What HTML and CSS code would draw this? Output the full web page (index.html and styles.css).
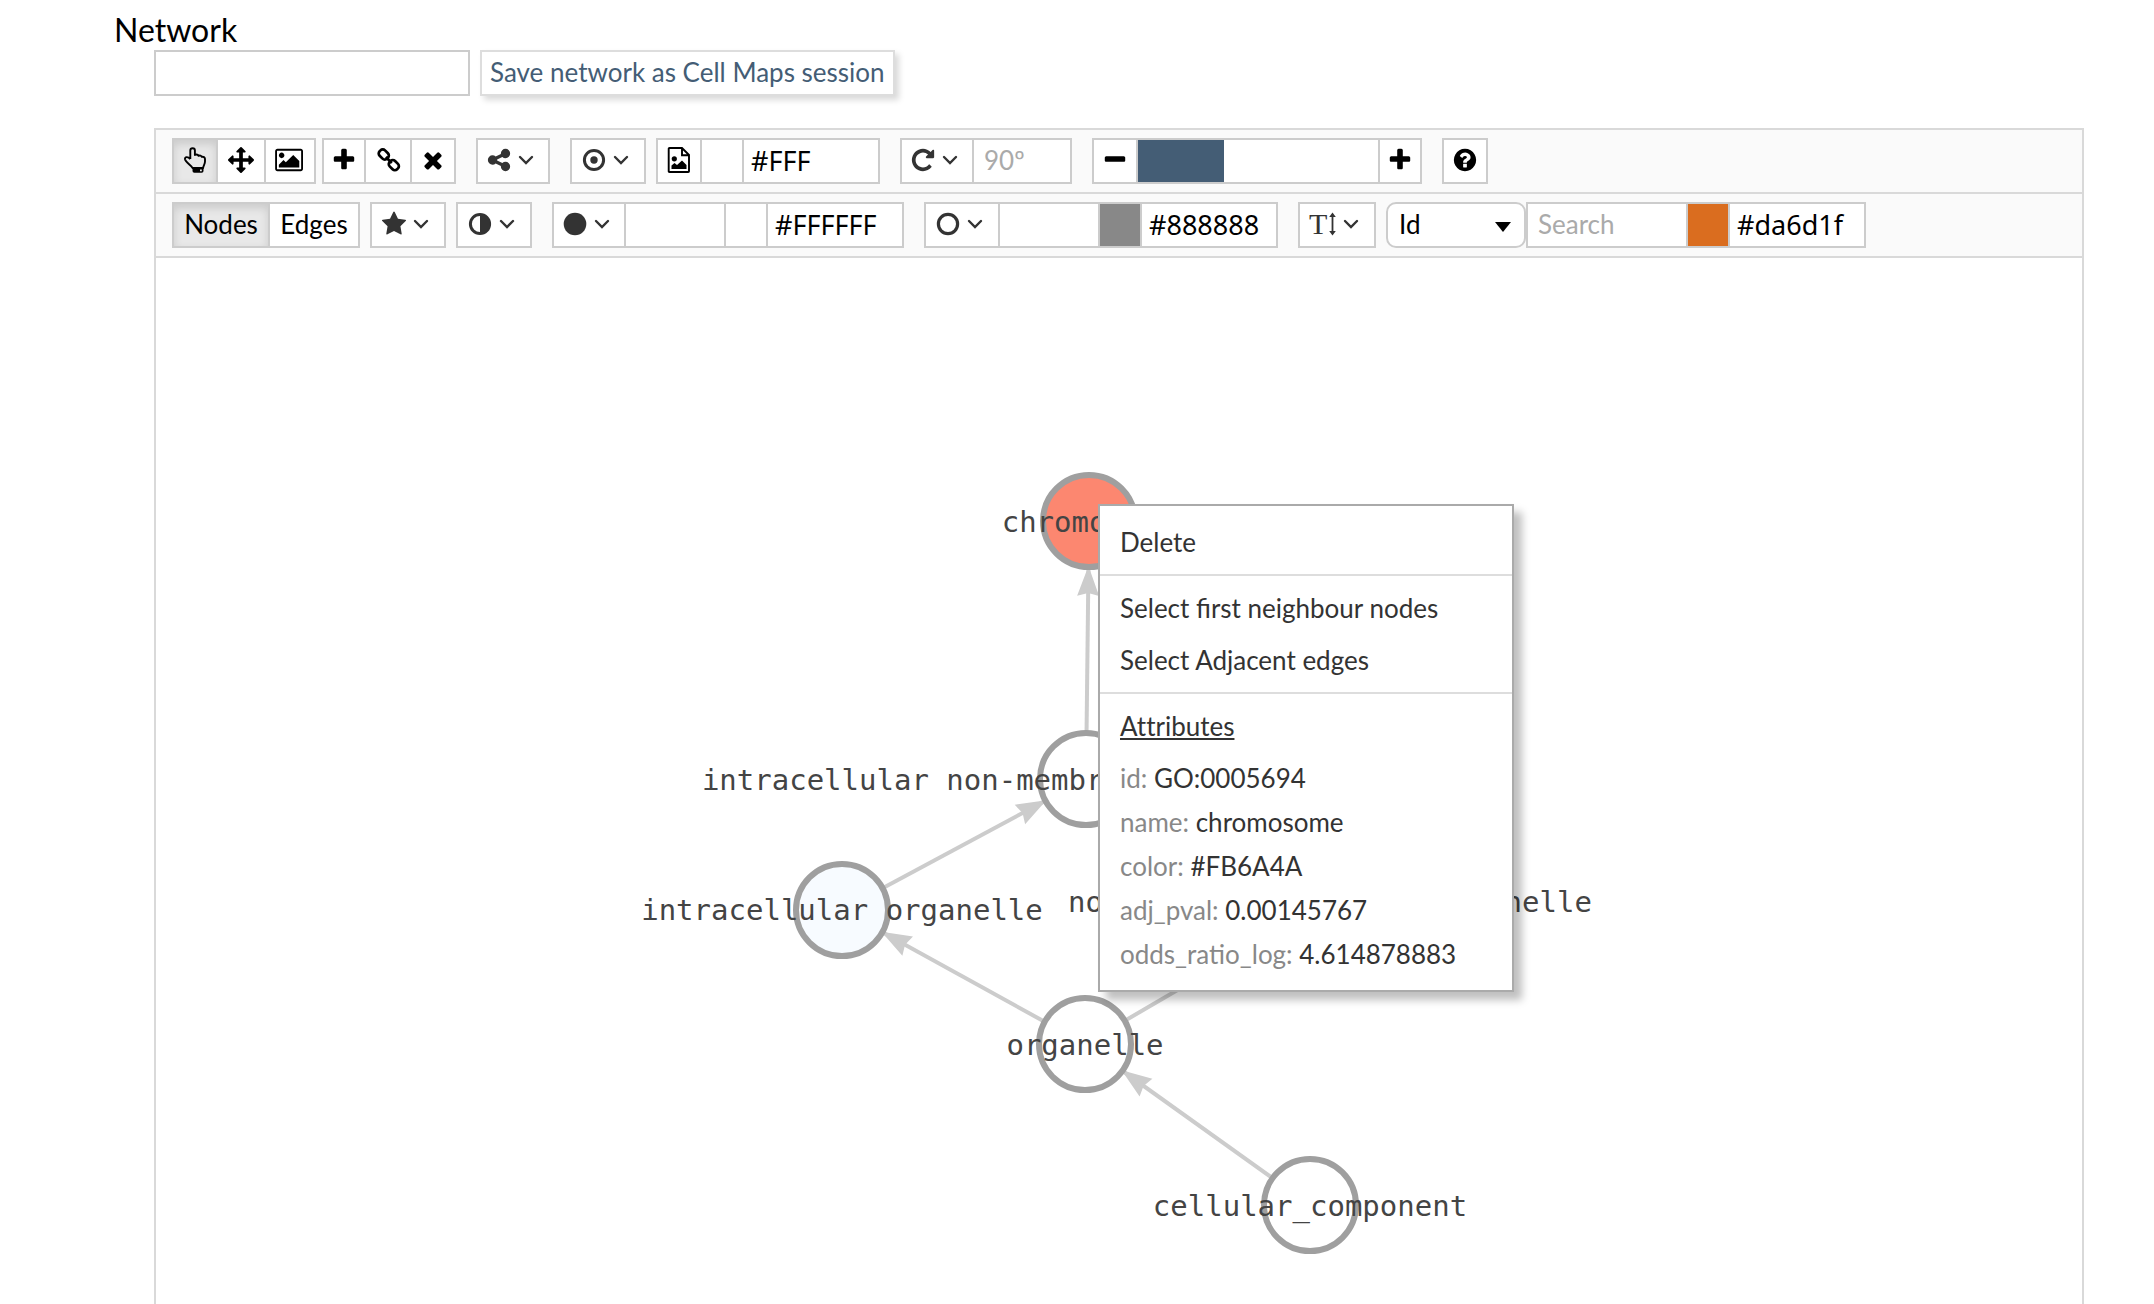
FILE: index.html
```html
<!DOCTYPE html>
<html lang="en">
<head>
<meta charset="utf-8">
<title>Network</title>
<link rel="stylesheet" href="styles.css">
</head>
<body>
<svg class="sprite" aria-hidden="true">
  <symbol id="plus" viewBox="0 0 1792 1792"><path d="M1600 736v192q0 40-28 68t-68 28h-416v416q0 40-28 68t-68 28h-192q-40 0-68-28t-28-68v-416h-416q-40 0-68-28t-28-68v-192q0-40 28-68t68-28h416v-416q0-40 28-68t68-28h192q40 0 68 28t28 68v416h416q40 0 68 28t28 68z"/></symbol>
  <symbol id="chevron" viewBox="0 0 16 26"><path d="M2 10l6 6 6-6" fill="none" stroke="currentColor" stroke-width="2.4" stroke-linecap="round"/></symbol>
</svg>

<h1 class="title">Network</h1>
<main class="viewer">
  <form class="session">
    <input class="session-name" type="text" aria-label="Session name">
    <button class="session-save" type="button">Save network as Cell Maps session</button>
  </form>

  <section class="panel">
    <div class="toolbar">
      <div class="group tight">
        <button class="seg w42 active" type="button" aria-label="Select"><svg class="icon" viewBox="0 0 26 26"><path d="M8.3 12V3.6a2.3 2.3 0 0 1 4.6 0V8c1.4-.7 3-.3 3.6.8 1.3-.6 2.8-.2 3.3 1 1.6-.4 3.2.6 3.2 2.2v2.5c0 2.800-1.700 4-1.900 6.500H10.500C9.500 18.200 3.500 15.500 3 12.200c-.2-2.400 2.800-3 5.300-.2" fill="none" stroke="currentColor" stroke-width="1.900" stroke-linejoin="round"/><path fill-rule="evenodd" d="M10.500 20.500h11V24q0 1.800-1.800 1.800h-7.400q-1.800 0-1.800-1.800zM18 22.500v1.800h1.800v-1.800z"/></svg></button>
        <button class="seg w46" type="button" aria-label="Move"><svg class="icon" viewBox="0 0 1792 1792"><path d="M1792 896q0 26-19 45l-256 256q-19 19-45 19t-45-19-19-45v-128h-384v384h128q26 0 45 19t19 45-19 45l-256 256q-19 19-45 19t-45-19l-256-256q-19-19-19-45t19-45 45-19h128v-384h-384v128q0 26-19 45t-45 19-45-19l-256-256q-19-19-19-45t19-45l256-256q19-19 45-19t45 19 19 45v128h384v-384h-128q-26 0-45-19t-19-45 19-45l256-256q19-19 45-19t45 19l256 256q19 19 19 45t-19 45-45 19h-128v384h384v-128q0-26 19-45t45-19 45 19l256 256q19 19 19 45z"/></svg></button>
        <button class="seg w48" type="button" aria-label="Background image"><svg class="icon wide" viewBox="0 0 1920 1792"><path d="M576 576q0 80-56 136t-136 56-136-56-56-136 56-136 136-56 136 56 56 136zm1024 384v448h-1408v-192l320-320 160 160 512-512zm96-704h-1600q-13 0-22.500 9.500t-9.500 22.500v1216q0 13 9.500 22.500t22.500 9.500h1600q13 0 22.500-9.500t9.500-22.500v-1216q0-13-9.500-22.500t-22.500-9.500zm160 32v1216q0 66-47 113t-113 47h-1600q-66 0-113-47t-47-113v-1216q0-66 47-113t113-47h1600q66 0 113 47t47 113z"/></svg></button>
      </div>
      <div class="group wide-gap">
        <button class="seg w40" type="button" aria-label="Add node"><svg class="icon"><use href="#plus"/></svg></button>
        <button class="seg w44" type="button" aria-label="Link nodes"><svg class="icon" viewBox="0 0 26 26"><g fill="none" stroke="currentColor" stroke-width="2.700"><rect x="-5" y="-3.800" width="10.500" height="7.600" rx="3.200" transform="translate(8.600 7.300) rotate(45)"/><rect x="-5.500" y="-3.800" width="10.500" height="7.600" rx="3.200" transform="translate(19 18.300) rotate(45)"/><path d="M10.800 10l6 6"/></g></svg></button>
        <button class="seg w42" type="button" aria-label="Remove"><svg class="icon" viewBox="0 0 1792 1792"><path d="M1490 1322q0 40-28 68l-136 136q-28 28-68 28t-68-28l-294-294-294 294q-28 28-68 28t-68-28l-136-136q-28-28-28-68t28-68l294-294-294-294q-28-28-28-68t28-68l136-136q28-28 68-28t68 28l294 294 294-294q28-28 68-28t68 28l136 136q28 28 28 68t-28 68l-294 294 294 294q28 28 28 68z"/></svg></button>
      </div>
      <div class="group wide-gap">
        <button class="seg drop w70" type="button" aria-label="Layout"><svg class="icon" viewBox="0 0 1792 1792"><path d="M1344 1024q133 0 226.500 93.500t93.500 226.500-93.500 226.500-226.500 93.500-226.500-93.500-93.500-226.500q0-12 2-34l-360-180q-92 86-218 86-133 0-226.500-93.500t-93.500-226.500 93.500-226.500 226.500-93.500q126 0 218 86l360-180q-2-22-2-34 0-133 93.500-226.500t226.500-93.500 226.500 93.500 93.500 226.500-93.500 226.500-226.500 93.500q-126 0-218-86l-360 180q2 22 2 34t-2 34l360 180q92-86 218-86z"/></svg><svg class="chevron"><use href="#chevron"/></svg></button>
      </div>
      <div class="group">
        <button class="seg drop w72" type="button" aria-label="Selection"><svg class="icon" viewBox="0 0 26 26"><circle cx="13" cy="13" r="9.600" fill="none" stroke="currentColor" stroke-width="3"/><circle cx="13" cy="13" r="3.700"/></svg><svg class="chevron"><use href="#chevron"/></svg></button>
      </div>
      <div class="group wide-gap">
        <button class="seg w42" type="button" aria-label="Export image"><svg class="icon" viewBox="0 0 26 26"><path d="M3.500 1h12.500l7 7v16.200q0 .8-.8.8H3.500q-.8 0-.8-.8V1.800q0-.8.8-.8zM16 1v7.300h7" fill="none" stroke="currentColor" stroke-width="1.900"/><circle cx="8.300" cy="11.800" r="2.600"/><path d="M5.500 22v-3.500l3-2.500 2.500 2 5-4.500 4.500 4.500V22z"/></svg></button>
        <button class="seg w40" type="button" aria-label="Background colour"></button>
        <input class="seg w134 hex" type="text" value="#FFF" aria-label="Background colour code">
      </div>
      <div class="group wide-gap">
        <button class="seg drop w70" type="button" aria-label="Rotate"><svg class="icon" viewBox="0 0 1792 1792"><path d="M1664 256v448q0 26-19 45t-45 19h-448q-42 0-59-40-17-39 14-69l138-138q-148-137-349-137-104 0-198.500 40.500t-163.500 109.500-109.500 163.500-40.500 198.500 40.500 198.500 109.500 163.500 163.500 109.500 198.500 40.500q119 0 225-52t179-147q7-10 23-12 15 0 25 9l137 138q9 8 9.500 20.500t-7.500 22.500q-109 132-264 204.500t-327 72.500q-156 0-298-61t-245-164-164-245-61-298 61-298 164-245 245-164 298-61q147 0 284.500 55.500t244.500 156.500l130-129q29-31 70-14 39 17 39 59z"/></svg><svg class="chevron"><use href="#chevron"/></svg></button>
        <input class="seg w96 field" type="text" placeholder="90º" aria-label="Rotation angle">
      </div>
      <div class="group wide-gap">
        <button class="seg w42" type="button" aria-label="Zoom out"><svg class="icon" viewBox="0 0 1792 1792"><path d="M1600 736v192q0 40-28 68t-68 28h-1216q-40 0-68-28t-28-68v-192q0-40 28-68t68-28h1216q40 0 68 28t28 68z"/></svg></button>
        <input class="seg slider" type="range" min="0" max="100" value="36" aria-label="Zoom level">
        <button class="seg w40" type="button" aria-label="Zoom in"><svg class="icon"><use href="#plus"/></svg></button>
      </div>
      <div class="group">
        <button class="seg w42" type="button" aria-label="Help"><svg class="icon" viewBox="0 0 1792 1792"><path d="M1024 1376v-192q0-14-9-23t-23-9h-192q-14 0-23 9t-9 23v192q0 14 9 23t23 9h192q14 0 23-9t9-23zm256-672q0-88-55.500-163t-138.500-116-170-41q-243 0-371 213-15 24 8 42l132 100q7 6 19 6 16 0 25-12 53-68 86-92 34-24 86-24 48 0 85.500 26t37.500 59q0 38-20 61t-68 45q-63 28-115.500 86.500t-52.500 125.500v36q0 14 9 23t23 9h192q14 0 23-9t9-23q0-19 21.500-49.500t54.500-49.500q32-18 49-28.500t46-35 44.500-48 28-60.500 12.500-81zm384 192q0 209-103 385.500t-279.500 279.500-385.500 103-385.500-103-279.500-279.500-103-385.500 103-385.500 279.500-279.500 385.500-103 385.500 103 279.500 279.500 103 385.500z"/></svg></button>
      </div>
    </div>

    <div class="toolbar">
      <div class="group">
        <button class="seg w94 active" type="button">Nodes</button>
        <button class="seg w88" type="button">Edges</button>
      </div>
      <div class="group">
        <button class="seg drop w72" type="button" aria-label="Shape"><svg class="icon" viewBox="0 0 1792 1792"><path d="M1728 647q0 22-26 48l-363 354 86 500q1 7 1 20 0 21-10.500 35.500t-30.500 14.500q-19 0-40-12l-449-236-449 236q-22 12-40 12-21 0-31.500-14.500t-10.500-35.500q0-6 2-20l86-500-364-354q-25-27-25-48 0-37 56-46l502-73 225-455q19-41 49-41t49 41l225 455 502 73q56 9 56 46z"/></svg><svg class="chevron"><use href="#chevron"/></svg></button>
      </div>
      <div class="group wide-gap">
        <button class="seg drop w72" type="button" aria-label="Opacity"><svg class="icon" viewBox="0 0 26 26"><circle cx="13" cy="13" r="9.600" fill="none" stroke="currentColor" stroke-width="3"/><path d="M13 3a10 10 0 0 1 0 20z"/></svg><svg class="chevron"><use href="#chevron"/></svg></button>
      </div>
      <div class="group wide-gap">
        <button class="seg drop w70" type="button" aria-label="Size"><svg class="icon" viewBox="0 0 26 26"><circle cx="13" cy="13" r="11.300"/></svg><svg class="chevron"><use href="#chevron"/></svg></button>
        <input class="seg w98 field" type="text" aria-label="Node size">
        <button class="seg w40" type="button" aria-label="Node colour"></button>
        <input class="seg w134 hex" type="text" value="#FFFFFF" aria-label="Node colour code">
      </div>
      <div class="group wide-gap">
        <button class="seg drop w72" type="button" aria-label="Stroke"><svg class="icon" viewBox="0 0 26 26"><circle cx="13" cy="13" r="9.600" fill="none" stroke="currentColor" stroke-width="3.200"/></svg><svg class="chevron"><use href="#chevron"/></svg></button>
        <input class="seg w98 field" type="text" aria-label="Stroke width">
        <button class="seg w40 grey" type="button" aria-label="Stroke colour"></button>
        <input class="seg w134 hex" type="text" value="#888888" aria-label="Stroke colour code">
      </div>
      <div class="group">
        <button class="seg drop w74" type="button" aria-label="Label size"><svg class="icon wide" viewBox="0 0 28 26"><text class="glyph" x="0" y="23">T</text><path d="M23.500 4v18" stroke="currentColor" stroke-width="1.800"/><path d="M23.500 1.500l3.300 4.500h-6.600zM23.500 24.500l3.300-4.500h-6.600z"/></svg><svg class="chevron"><use href="#chevron"/></svg></button>
      </div>
      <div class="pick">
        <select class="select" aria-label="Search attribute"><option>Id</option><option>name</option></select>
        <svg class="caret" viewBox="0 0 16 10"><path d="M0 0h16L8 10z"/></svg>
      </div>
      <div class="group">
        <input class="seg w158 field" type="text" placeholder="Search" aria-label="Search">
        <button class="seg w40 orange" type="button" aria-label="Highlight colour"></button>
        <input class="seg w134 hex" type="text" value="#da6d1f" aria-label="Highlight colour code">
      </div>
    </div>

    <div class="canvas">
      <svg class="graph" role="img" aria-label="Network graph">
        <defs>
          <marker id="arrow" markerUnits="userSpaceOnUse" markerWidth="30" markerHeight="24" refX="75" refY="12" orient="auto" viewBox="0 0 30 24" overflow="visible"><path d="M30 12L0 1l3 11-3 11z" fill="#ccc"/></marker>
        </defs>
        <g class="edges">
          <path d="M930 521L933 263"/>
          <path d="M686 652L930 521"/>
          <path d="M929 786L686 652"/>
          <path d="M929 786L1174 643"/>
          <path d="M1154 947L929 786"/>
        </g>
        <g class="nodes">
          <circle class="hot" cx="933" cy="263" r="46"/>
          <circle cx="930" cy="521" r="46"/>
          <circle class="cool" cx="686" cy="652" r="46"/>
          <circle cx="1174" cy="643" r="46"/>
          <circle cx="929" cy="786" r="46"/>
          <circle cx="1154" cy="947" r="46"/>
        </g>
        <g class="labels">
          <text x="933" y="274">chromosome</text>
          <text x="930" y="532">intracellular non-membrane-bounded organelle</text>
          <text x="686" y="662">intracellular organelle</text>
          <text x="1174" y="654">non-membrane-bounded organelle</text>
          <text x="929" y="797">organelle</text>
          <text x="1154" y="958">cellular_component</text>
        </g>
      </svg>

      <div class="menu">
        <div class="menu-part">
          <button class="menu-item" type="button">Delete</button>
        </div>
        <div class="menu-part">
          <button class="menu-item" type="button">Select first neighbour nodes</button>
          <button class="menu-item" type="button">Select Adjacent edges</button>
        </div>
        <div class="menu-part">
          <h2 class="menu-title">Attributes</h2>
          <dl class="attrs">
            <div><dt>id:</dt> <dd>GO:0005694</dd></div>
            <div><dt>name:</dt> <dd>chromosome</dd></div>
            <div><dt>color:</dt> <dd>#FB6A4A</dd></div>
            <div><dt>adj_pval:</dt> <dd>0.00145767</dd></div>
            <div><dt>odds_ratio_log:</dt> <dd>4.614878883</dd></div>
          </dl>
        </div>
      </div>
    </div>
  </section>
</main>
</body>
</html>
```
FILE: styles.css
```css
* { box-sizing: border-box; }

body {
  margin: 0;
  min-height: 100vh;
  display: flex;
  flex-direction: column;
  background: #fff;
  color: #000;
  font-family: Lato, sans-serif;
  font-size: 26px;
}

button, input, select {
  margin: 0;
  padding: 0;
  border: 0;
  border-radius: 0;
  background: #fff;
  color: inherit;
  font: inherit;
}

.sprite { display: none; }

.title {
  margin: 0;
  padding: 12px 0 2px 114px;
  font-size: 32px;
  font-weight: 400;
  line-height: 36px;
}

.viewer {
  flex: 1;
  display: flex;
  flex-direction: column;
  gap: 32px;
  margin: 0 70px 0 154px;
}

.session { display: flex; gap: 10px; }

.session-name {
  width: 316px;
  height: 46px;
  padding: 0 10px;
  border: 2px solid #ccc;
}

.session-save {
  height: 46px;
  padding: 0 8px 2px;
  border: 2px solid #ddd;
  box-shadow: 4px 4px 6px rgba(0, 0, 0, 0.15);
  color: #445d75;
}

.panel {
  flex: 1;
  display: flex;
  flex-direction: column;
  border: 2px solid #d9d9d9;
  border-bottom: 0;
}

.toolbar {
  display: flex;
  padding: 8px 16px;
  border-bottom: 2px solid #d9d9d9;
  background: #fafafa;
}

.group {
  display: flex;
  height: 46px;
  margin-right: 10px;
  border: 2px solid #ccc;
  background: #ccc;
  gap: 2px;
}

.group.tight { margin-right: 6px; }
.group.wide-gap { margin-right: 20px; }

.seg {
  display: flex;
  align-items: center;
  justify-content: center;
  height: 42px;
  padding-bottom: 2px;
}

.w40 { width: 40px; }
.w42 { width: 42px; }
.w44 { width: 44px; }
.w46 { width: 46px; }
.w48 { width: 48px; }
.w70 { width: 70px; }
.w72 { width: 72px; }
.w74 { width: 74px; }
.w88 { width: 88px; }
.w94 { width: 94px; }
.w96 { width: 96px; }
.w98 { width: 98px; }
.w134 { width: 134px; }
.w158 { width: 158px; }

.seg.active {
  background: #e8e8e8;
  box-shadow: inset 0 4px 8px rgba(0, 0, 0, 0.13);
}

.seg.drop {
  gap: 6px;
  padding-right: 6px;
  color: #333;
}

.seg.field { padding: 0 10px 2px; }

.seg.hex {
  padding: 0 7px 2px;
  font-family: "Noto Sans", sans-serif;
  font-size: 27px;
}

.seg.grey { background: #888; }
.seg.orange { background: #da6d1f; }

::placeholder { color: #aaa; opacity: 1; }

.slider {
  width: 240px;
  appearance: none;
  background: linear-gradient(to right, #445d75 36%, #fff 36%);
}

.slider::-webkit-slider-thumb {
  appearance: none;
  width: 2px;
  height: 40px;
  background: transparent;
}

.icon {
  flex: none;
  width: 26px;
  height: 26px;
  fill: currentColor;
  overflow: visible;
}

.icon.wide { width: 28px; }

.chevron {
  flex: none;
  width: 16px;
  height: 26px;
}

.glyph {
  font-family: "Liberation Serif", serif;
  font-size: 30px;
}

.pick { display: grid; align-items: center; }

.select {
  grid-area: 1 / 1;
  width: 140px;
  height: 46px;
  padding: 0 11px 2px;
  border: 2px solid #ccc;
  border-radius: 10px;
  appearance: none;
}

.caret {
  grid-area: 1 / 1;
  justify-self: end;
  width: 16px;
  height: 10px;
  margin: 4px 15px 0 0;
  pointer-events: none;
}

.canvas {
  position: relative;
  flex: 1;
  display: flex;
  overflow: hidden;
}

.graph { flex: 1; }

.edges { fill: none; stroke: #ccc; stroke-width: 4; }
.edges path { marker-end: url(#arrow); }

.nodes { fill: #fff; stroke: #9f9f9f; stroke-width: 6; }
.nodes .hot { fill: #fc8770; }
.nodes .cool { fill: #f7fbff; }

.labels {
  fill: #444;
  font-family: "DejaVu Sans Mono", monospace;
  font-size: 29px;
  text-anchor: middle;
}

.menu {
  position: absolute;
  left: 942px;
  top: 246px;
  width: 416px;
  padding: 4px 0 8px;
  border: 2px solid #aaa;
  background: #fff;
  box-shadow: 8px 8px 8px rgba(0, 0, 0, 0.25);
  color: #333;
}

.menu-part { padding: 6px 0; }
.menu-part + .menu-part { border-top: 2px solid #ddd; }

.menu-item {
  display: block;
  width: 100%;
  padding: 0 20px;
  background: none;
  line-height: 52px;
  text-align: left;
}

.menu-title {
  margin: 0 20px;
  font-size: 26px;
  font-weight: 400;
  font-variant-ligatures: none;
  line-height: 52px;
  text-decoration: underline;
}

.attrs { margin: 4px 20px 0; line-height: 44px; }
.attrs dt { display: inline; color: #888; }
.attrs dd { display: inline; margin: 0; }
```
